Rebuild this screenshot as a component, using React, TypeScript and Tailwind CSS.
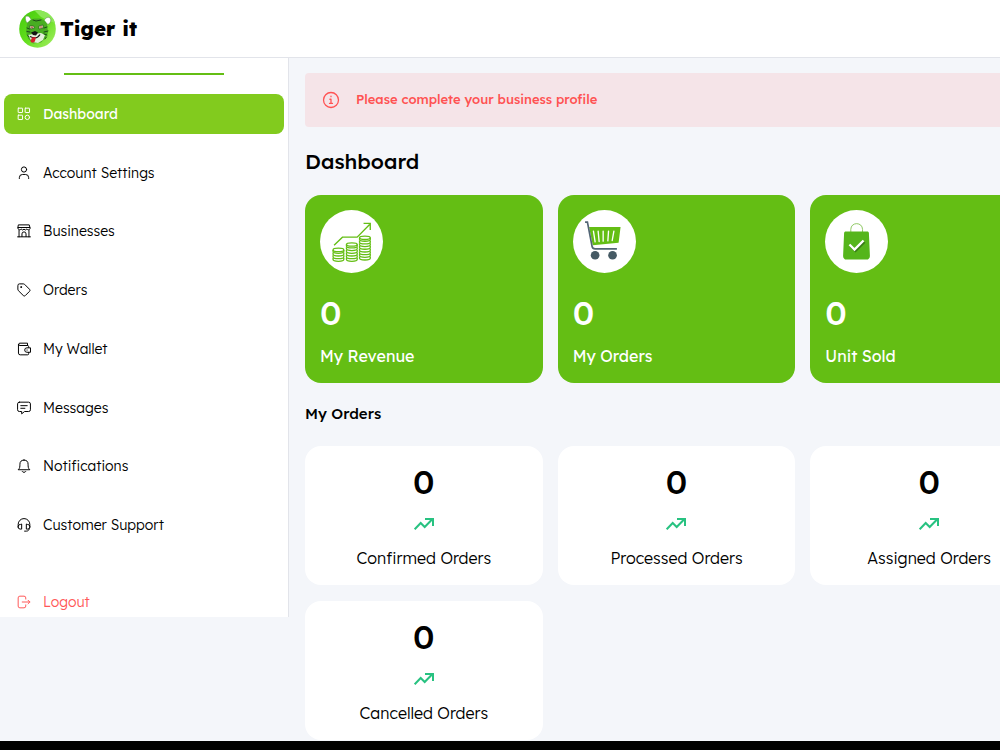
import type { ReactNode } from "react";

const stroke = {
  fill: "none",
  stroke: "currentColor",
  strokeWidth: 1.7,
  strokeLinecap: "round",
  strokeLinejoin: "round",
} as const;

function NavIcon({ children }: { children: ReactNode }) {
  return (
    <svg viewBox="0 0 24 24" className="size-3.5 shrink-0" aria-hidden="true" {...stroke}>
      {children}
    </svg>
  );
}

const navItems: { label: string; icon: ReactNode }[] = [
  {
    label: "Dashboard",
    icon: (
      <>
        <rect x="2" y="2" width="7.500" height="7.500" rx=".5" />
        <rect x="14" y="2" width="7.500" height="7.500" rx=".5" />
        <rect x="2" y="14" width="7.500" height="7.500" rx=".5" />
        <circle cx="17.750" cy="17.750" r="3.750" />
      </>
    ),
  },
  {
    label: "Account Settings",
    icon: (
      <>
        <circle cx="12" cy="6" r="4.500" />
        <path d="M4 21.500V20a5.500 5.500 0 0 1 5.500-5.500h5A5.500 5.500 0 0 1 20 20v1.500" />
      </>
    ),
  },
  {
    label: "Businesses",
    icon: (
      <>
        <path d="M3 1.500h18l1.500 6a3 3 0 0 1-5.500 1 3.300 3.300 0 0 1-5 .500 3.300 3.300 0 0 1-5-.500 3 3 0 0 1-5.500-1ZM2 6h20M3.500 11v11M20.500 11v11M1 22h22M8.500 21.500V17a3.500 3.500 0 0 1 7 0v4.500" />
      </>
    ),
  },
  {
    label: "Orders",
    icon: (
      <>
        <path d="M1.500 4a2.500 2.500 0 0 1 2.500-2.500h7a3 3 0 0 1 2 .8l8.500 8.500a2.500 2.500 0 0 1 0 3.500l-7.200 7.200a2.500 2.500 0 0 1-3.500 0L2.300 13a3 3 0 0 1-.8-2Z" />
        <circle cx="7" cy="7" r=".8" fill="currentColor" />
      </>
    ),
  },
  {
    label: "My Wallet",
    icon: (
      <>
        <path d="M20 9V8a2 2 0 0 0-2-2H5a2 2 0 0 1 0-4h13v4M2.500 4v15a3 3 0 0 0 3 3H18a2 2 0 0 0 2-2v-2" />
        <path d="M22.500 10H17a3.800 3.800 0 0 0 0 7.600h5.500ZM17 13.800h.5" />
      </>
    ),
  },
  {
    label: "Messages",
    icon: (
      <>
        <path d="M4 2h16a3 3 0 0 1 3 3v10a3 3 0 0 1-3 3h-7l-5 4v-4H4a3 3 0 0 1-3-3V5a3 3 0 0 1 3-3Z" />
        <path d="M6.500 8h11M6.500 12.500h7" />
      </>
    ),
  },
  {
    label: "Notifications",
    icon: (
      <>
        <path d="M2.500 18c2.500-2 2.500-5 2.500-9a7 7 0 0 1 14 0c0 4 0 7 2.500 9ZM9 21.500a3.500 3.500 0 0 0 6 0M12 1v1" />
      </>
    ),
  },
  {
    label: "Customer Support",
    icon: (
      <>
        <path d="M2 16v-5a10 10 0 0 1 20 0v5M8 11v8H5.500a3.500 3.500 0 0 1-3.500-3.500v-1A3.500 3.500 0 0 1 5.500 11ZM16 11v8h2.500a3.500 3.500 0 0 0 3.500-3.500v-1a3.500 3.500 0 0 0-3.500-3.500ZM21 18.500c-.5 2.500-2 4-5 4h-3" />
      </>
    ),
  },
];

function TigerLogo() {
  return (
    <svg viewBox="0 0 37 38" className="h-[38px] w-[37px]" role="img" aria-label="Tiger it logo">
      <defs>
        <linearGradient id="disc" x1="0" y1="0" x2="1" y2="1">
          <stop offset="0" stopColor="#42c90c" />
          <stop offset=".5" stopColor="#63df1d" />
          <stop offset="1" stopColor="#a9ee68" />
        </linearGradient>
      </defs>
      <ellipse cx="18.500" cy="19" rx="18.300" ry="18.800" fill="url(#disc)" />
      <path d="M16 1c9-2 18 4 20 12l-6-2-8-4Z" fill="#8be757" />
      <path d="M8 13C5.500 9 6 6 8 6s4 2 4.500 5ZM25 11c1-3.500 4.500-4.500 6-3s1 5-2 6.500Z" fill="#fff" stroke="#5b8a4c" strokeWidth=".6" />
      <path d="M8 14c2-5 7-6 11-5.500 5 0 8 2.500 9 6l1 8-2 5-5 5-8 1-5-5-2-7Z" fill="#48ad22" />
      <path d="m9 25 5-1 8-1 4 2-2 5-5 3-6-1Z" fill="#e3efdc" />
      <path d="m14 10 3 1 5-1M8 18l2.500 1M8 21.500l3 .5M28 17l-3 1M29 21l-4 1M28 25l-3-1M10 27l-1.500-2M26 29l1.500-2" fill="none" stroke="#1d4a19" strokeWidth="1" strokeLinecap="round" />
      <path d="m10.500 16 4 0 1 2-4 1ZM20 16l4-1v3l-4 1Z" fill="#f7e9c7" stroke="#22421c" strokeWidth=".6" />
      <circle cx="13" cy="17.300" r=".8" fill="#a32b20" />
      <circle cx="22" cy="17" r=".8" fill="#a32b20" />
      <path d="m12 22.500 4-1.500 3 1.500-2 3-3-.5Z" fill="#151515" />
      <path d="M11 26.500c4 2 8 1.500 10-2" fill="none" stroke="#151515" strokeWidth="1.200" />
      <path d="M13 27.500 17 27l-1 4c-1 2-4 2-4.500 0Z" fill="#d5202b" />
    </svg>
  );
}

function Coins({ x, top, layers }: { x: number; top: number; layers: number }) {
  return (
    <g>
      <ellipse cx={x + 16} cy={top} rx="16" ry="5" />
      {Array.from({ length: layers }, (_, i) => (
        <path key={i} d={`M${x} ${top + i * 8}v5c0 7 32 7 32 0v-5`} />
      ))}
    </g>
  );
}

function RevenueIcon() {
  return (
    <svg viewBox="0 0 188 188" className="size-[63px]" aria-hidden="true">
      <circle cx="94" cy="94" r="94" fill="#fff" />
      <g fill="none" stroke="#64be14" strokeWidth="4">
        <Coins x={39} top={119} layers={4} />
        <Coins x={79} top={103} layers={6} />
        <Coins x={118} top={83} layers={8} />
        <path d="m42 105 25-24h44l37-38M130 40h20v20" strokeWidth="4" />
      </g>
    </svg>
  );
}

function CartIcon() {
  return (
    <svg viewBox="0 0 188 188" className="size-[63px]" aria-hidden="true">
      <circle cx="94" cy="94" r="94" fill="#fff" />
      <path d="M48 51h94l-6 47-77 7Z" fill="#64be14" />
      <path d="m61 63 5 32M75 63l3 31M90 63v30M106 63l-2 29M122 63l-5 28" stroke="#fff" strokeWidth="4" strokeLinecap="round" />
      <path d="M36 36h7l14 73c1 5 4 7 9 7h65" fill="none" stroke="#526575" strokeWidth="5" />
      <circle cx="66" cy="135" r="13" fill="#455a64" />
      <circle cx="118" cy="135" r="13" fill="#455a64" />
    </svg>
  );
}

function BagIcon() {
  return (
    <svg viewBox="0 0 188 188" className="size-[63px]" aria-hidden="true">
      <circle cx="94" cy="94" r="94" fill="#fff" />
      <path d="M77 70V58c0-23 35-23 35 0v12" fill="none" stroke="#79bd45" strokeWidth="2.500" />
      <path d="M62 64h64c3 0 5 2 5 5l3 68c0 6-4 11-10 11H64c-6 0-10-5-10-11l3-68c0-3 2-5 5-5Z" fill="#55b51b" />
      <path d="m76 107 15 15 27-27" fill="none" stroke="#397b17" strokeWidth="7" />
      <path d="m73 103 15 15 27-27" fill="none" stroke="#fff" strokeWidth="7" />
    </svg>
  );
}

const totals = [
  { label: "My Revenue", value: 0, icon: <RevenueIcon /> },
  { label: "My Orders", value: 0, icon: <CartIcon /> },
  { label: "Unit Sold", value: 0, icon: <BagIcon /> },
];

const orders = [
  { label: "Confirmed Orders", value: 0 },
  { label: "Processed Orders", value: 0 },
  { label: "Assigned Orders", value: 0 },
  { label: "Cancelled Orders", value: 0 },
];

export default function App() {
  return (
    <div className="flex min-h-screen flex-col overflow-x-hidden bg-[#f4f6fa] font-['Lexend','Inter',sans-serif] font-light text-black">
      <header className="flex h-[58px] items-center gap-1 border-b border-[#e2e4ea] bg-white px-[19px]">
        <TigerLogo />
        <span className="text-xl leading-7 font-extrabold">Tiger it</span>
      </header>

      <div className="flex flex-1 items-start">
        <aside className="w-[289px] shrink-0 border-r border-[#e2e4ea] bg-white px-1 pt-[15px]">
          <div className="mx-auto h-0.5 w-40 bg-[#64be14]" />
          <nav className="mt-[19px] flex h-[451px] flex-col justify-between">
            {navItems.map((item, index) => (
              <a
                key={item.label}
                href="#"
                aria-current={index === 0 ? "page" : undefined}
                className={
                  index === 0
                    ? "flex h-10 items-center gap-3 rounded-lg bg-[#82cb1e] px-[13px] text-sm font-normal text-white"
                    : "flex h-10 items-center gap-3 rounded-lg px-[13px] text-sm text-black"
                }
              >
                <NavIcon>{item.icon}</NavIcon>
                {item.label}
              </a>
            ))}
          </nav>
          <button type="button" className="mt-[46px] flex h-[26px] w-full items-center gap-3 px-[13px] pb-1 text-sm text-[#ff5757]">
            <NavIcon>
              <path d="M15 7V5a3 3 0 0 0-3-3H5a3 3 0 0 0-3 3v14a3 3 0 0 0 3 3h7a3 3 0 0 0 3-3v-2M9 12h13M19 9l3 3-3 3" />
            </NavIcon>
            Logout
          </button>
        </aside>

        <main className="min-w-[775px] flex-1 px-4 pt-[15px]">
          <div role="alert" className="flex h-[54px] items-center gap-4 rounded bg-[#f5e4e8] px-[17px] text-[13px] font-medium text-[#ff5252]">
            <svg viewBox="0 0 24 24" className="size-[18px] shrink-0" aria-hidden="true" {...stroke}>
              <circle cx="12" cy="12" r="10" />
              <path d="M10.500 11H12v5.500M10 16.500h4M12 7v.5" />
            </svg>
            Please complete your business profile
          </div>

          <h1 className="mt-4 text-[21px] leading-9 font-medium">Dashboard</h1>

          <section className="mt-4 grid grid-cols-3 gap-[15px]">
            {totals.map((card) => (
              <article key={card.label} className="flex flex-col items-start rounded-2xl bg-[#64be14] p-[15px] text-white">
                {card.icon}
                <strong className="mt-5 text-[34px] leading-10 font-medium">{card.value}</strong>
                <span className="mt-[11px] text-base leading-6 font-normal">{card.label}</span>
              </article>
            ))}
          </section>

          <h2 className="mt-[19px] text-[15px] leading-6 font-medium">My Orders</h2>

          <section className="mt-5 grid grid-cols-3 gap-x-[15px] gap-y-4">
            {orders.map((card) => (
              <article key={card.label} className="flex flex-col items-center rounded-2xl bg-white pt-4 pb-[15px]">
                <strong className="text-[34px] leading-10 font-medium">{card.value}</strong>
                <svg viewBox="0 0 20 12" className="mt-4 h-3 w-5" fill="none" stroke="#28c281" strokeWidth="2" aria-hidden="true">
                  <path d="m.7 11.300 6-6.300 4 4L18 1.500M11 1h8v7" />
                </svg>
                <span className="mt-4 text-base leading-6 text-black">{card.label}</span>
              </article>
            ))}
          </section>
        </main>
      </div>

      <footer className="h-[9px] bg-black" />
    </div>
  );
}
